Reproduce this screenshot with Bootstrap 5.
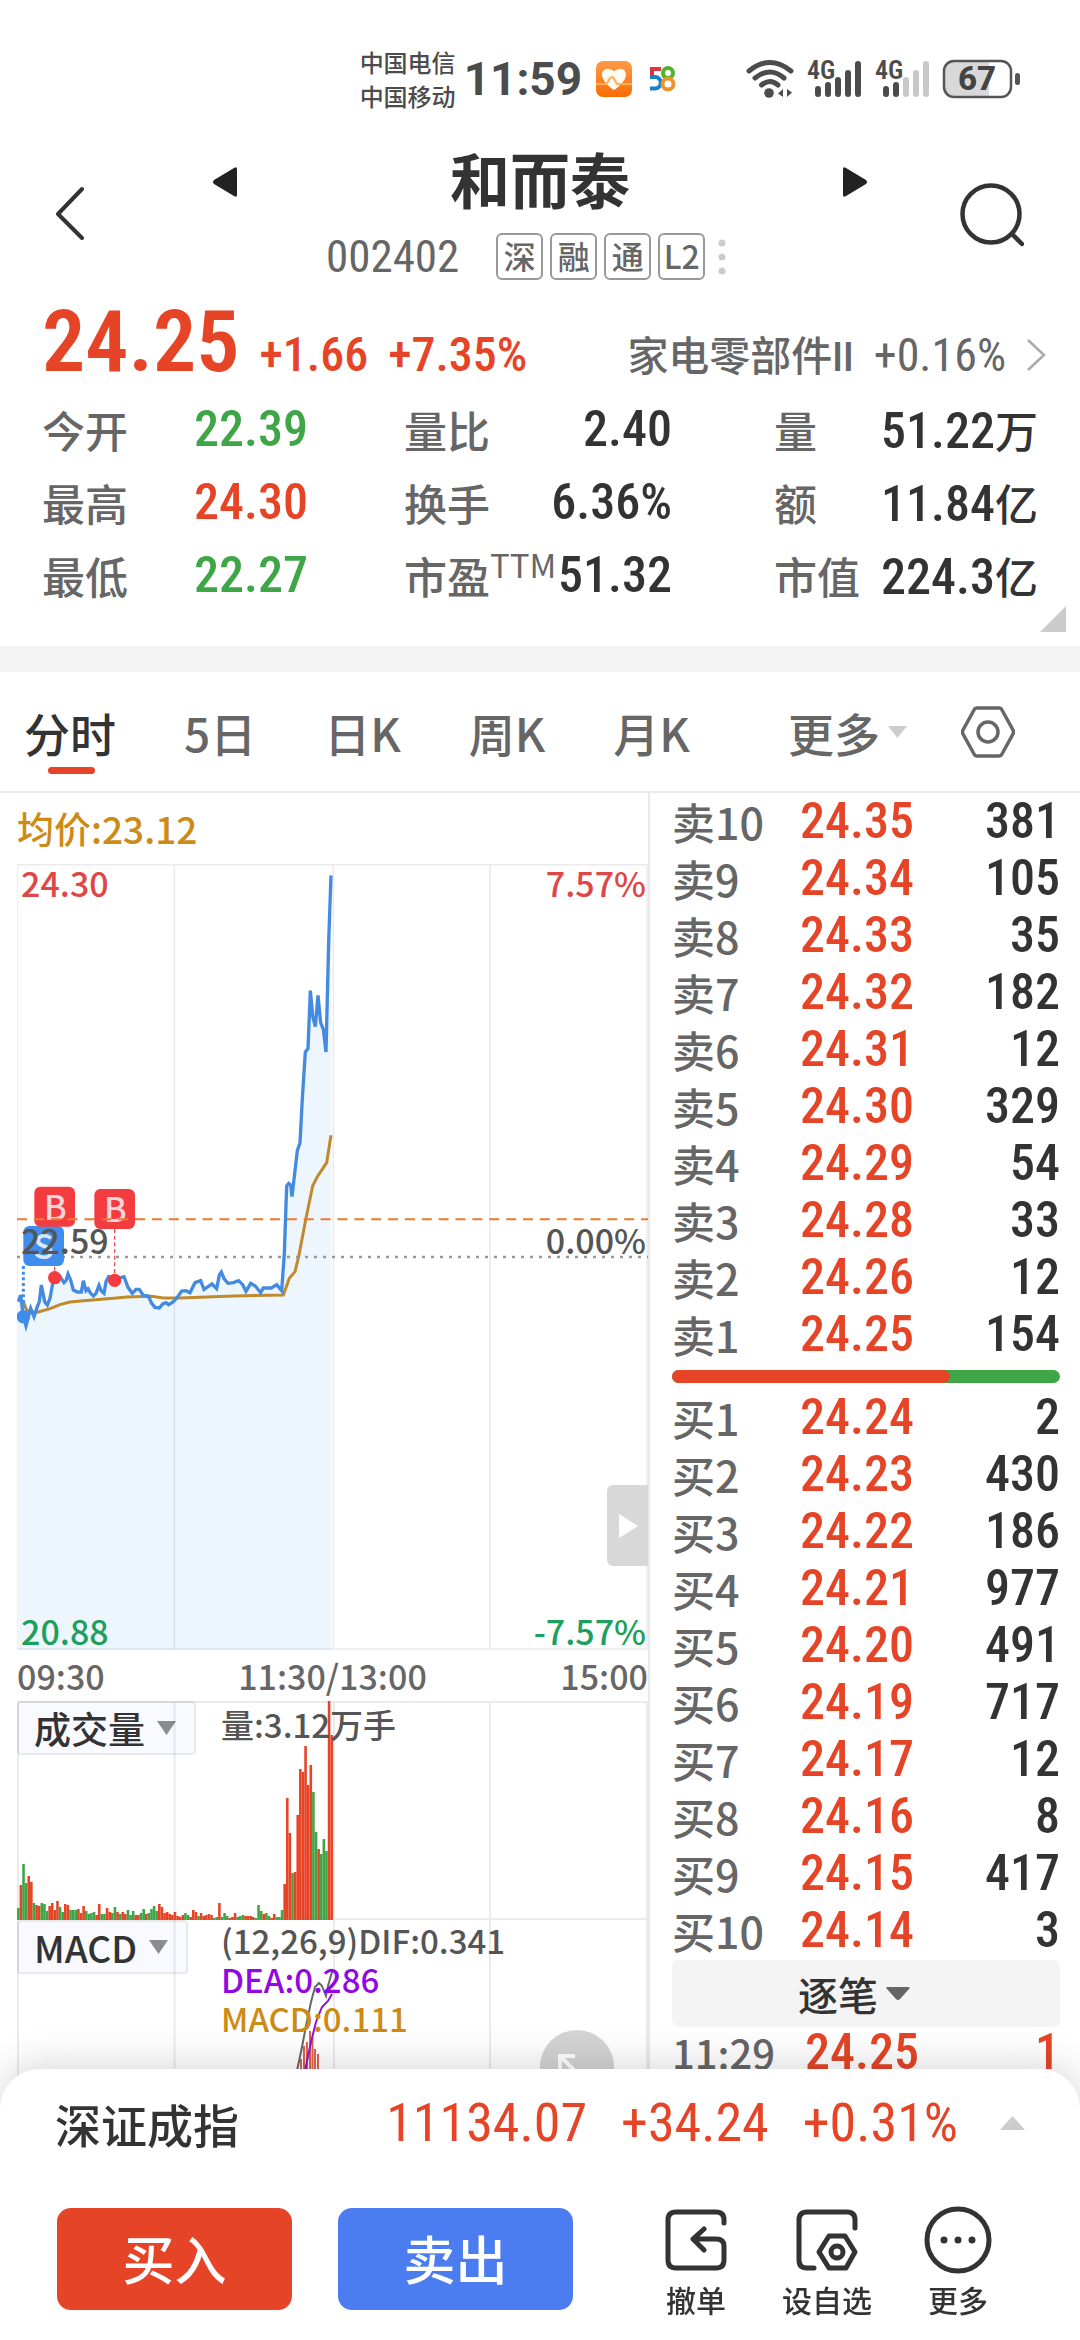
<!DOCTYPE html>
<html lang="zh-CN">
<head>
<meta charset="utf-8">
<meta name="viewport" content="width=device-width, initial-scale=1">
<title>和而泰 002402</title>
<link href="https://cdn.jsdelivr.net/npm/bootstrap@5.3.0/dist/css/bootstrap.min.css" rel="stylesheet">
<style>
  :root { --up:#e64426; --down:#3fa648; --ink:#333; --soft:#666; --rule:#e9e9e9; }
  body { font-family:"Noto Sans CJK SC","Noto Sans",sans-serif; font-weight:500; color:var(--ink); background:#fff; line-height:1; overflow-x:hidden; }
  .digits { font-family:"Roboto Condensed",Roboto,"Noto Sans CJK SC",sans-serif; }
  .up { color:var(--up); } .down { color:var(--down); } .soft { color:var(--soft); }
  button { font-weight:500; color:inherit; }
  svg { display:block; flex-shrink:0; }
  .plain { background:none; border:0; padding:0; }

  .status-row { padding:45px 59px 0 33.3%; color:#4c4c4c; }
  .carriers { font-size:24px; line-height:34px; }
  .clock { font-family:Roboto,sans-serif; font-size:46px; font-weight:700; margin:0 14px 0 8px; }

  .stock-head { padding:30px 56px 0; }
  .stock-mid { margin:0 92px 0 128px; }
  .stock-name { font-size:60px; line-height:70px; font-weight:700; }
  .code-line { padding-left:114px; margin-top:20px; gap:7px; }
  .code-num { font-size:45px; font-weight:400; line-height:47px; margin-right:30px; }
  .tag-box { width:47px; height:47px; border:2px solid #999; border-radius:6px; font-size:32px; line-height:41px; text-align:center; color:var(--soft); }

  .price-line { height:80px; padding:0 34px 0 42px; margin-top:22px; line-height:80px; }
  .price-big { font-size:86px; font-weight:600; }
  .price-sub { font-size:48px; margin-left:20px; }
  .sector { font-size:41px; gap:20px; text-decoration:none; }
  .sector .digits { font-size:46px; font-weight:400; }

  .stats { padding:0 42px 34px; margin-top:11px; gap:0 102px; display:grid; grid-template-columns:minmax(0,260fr) minmax(0,268fr) minmax(0,264fr); }
  .stat { height:73px; line-height:73px; font-size:43px; color:var(--soft); white-space:nowrap; }
  .stat-key { flex:0 0 152px; }
  .stat .digits { font-size:50px; }
  .stat .ink { color:var(--ink); }
  .stat sup { font-size:33px; font-weight:400; line-height:0; top:-16px; vertical-align:baseline; }
  .corner { right:14px; bottom:14px; }
  .band { height:26px; background:#f4f4f4; }

  .tabs { height:121px; padding:28px 65px 0 24px; border-bottom:2px solid var(--rule); gap:68px; font-size:46px; line-height:64px; }
  .tabs a, .tabs button { color:var(--soft); text-decoration:none; white-space:nowrap; }
  .tabs a.on { color:var(--ink); position:relative; }
  .tabs a.on::after { content:""; position:absolute; left:24px; right:21px; bottom:-10px; height:7px; border-radius:4px; background:var(--up); }

  .col-chart { flex:0 0 60%; padding-left:17px; min-width:0; }
  .col-book { flex:0 0 40%; padding:0 20px 0 22px; border-left:2px solid var(--rule); min-width:0; }
  .avg { font-size:37px; line-height:71px; color:#cd8b16; }
  .lab { position:absolute; font-size:34px; line-height:40px; color:#555; }
  .lab.l { left:4px; } .lab.r { right:2px; }
  .lab.t { top:-1px; color:#df4646; } .lab.m { top:356px; } .lab.b { bottom:-1px; color:#1d9f5f; }
  .handle { position:absolute; right:0; bottom:84px; width:41px; height:81px; background:#d8d8d8; border-radius:6px 0 0 6px; padding-left:12px; }
  .times { line-height:51px; font-size:34px; color:var(--soft); }
  .picker { position:absolute; left:0; top:0; height:54px; border:2px solid var(--rule); border-radius:4px; background:#f9faff; padding:0 18px 0 15px; font-size:37px; line-height:48px; gap:12px; }
  .readout { position:absolute; left:204px; top:3px; font-size:33px; line-height:40px; color:#555; }
  .readout.m3 { top:1px; line-height:39px; }
  .expand { position:absolute; right:34px; top:110px; width:74px; height:74px; border-radius:50%; background:#d4d4d4; padding-left:18px; padding-top:0; }

  .book { width:100%; }
  .book td { padding:0; height:57px; line-height:57px; }
  .book td:first-child { width:128px; font-size:43px; color:var(--soft); white-space:nowrap; }
  .book td:nth-child(2) { font-size:50px; color:var(--up); }
  .book td:last-child { font-size:50px; text-align:right; }
  .ratio { height:13px; margin:7px 0 6px; background:var(--down); border-radius:7px; overflow:hidden; }
  .ratio div { height:13px; background:var(--up); border-radius:0 7px 7px 0; }
  .tick-head { height:67px; margin-top:1px; background:#f4f4f4 !important; border-radius:6px; font-size:40px; gap:8px; padding-right:24px; }
  .book.last td { height:51px; line-height:51px; }
  .book.last td:first-child { width:133px; font-size:40px; }
  .book.last td:last-child { color:var(--up); }

  .sheet { background:#fff; border-radius:40px 40px 0 0; box-shadow:0 -4px 40px rgba(0,0,0,.16); padding-bottom:20px; }
  .index-line { padding:0 55px 0 55px; line-height:108px; height:108px; font-size:46px; gap:34px; }
  .index-line .digits { font-size:54px; font-weight:400; }
  .actions { padding:0 88px 0 57px; margin-top:29px; }
  .trade { width:235px; height:102px; margin-top:2px; border:0; border-radius:14px; color:#fff; font-size:52px; line-height:90px; padding-bottom:4px; }
  .trade.buy { background:#e64426; } .trade.sell { background:#4b7cf0; margin-left:46px; }
  .act { font-size:30px; line-height:42px; gap:4px; }
</style>
</head>
<body>
<div class="status-row d-flex align-items-center">
  <div class="carriers text-nowrap">中国电信<br>中国移动</div>
  <div class="clock">11:59</div>
  <svg width="36" height="38" viewBox="0 0 36 38"><defs><linearGradient id="og" x1="0" y1="0" x2="0" y2="1"><stop offset="0" stop-color="#fd9a45"/><stop offset="1" stop-color="#fb6c07"/></linearGradient></defs><rect y="1" width="36" height="36" rx="7" fill="url(#og)"/><path d="M18 30C12 26 6 20 6 14.500C6 9 13 6.500 18 11.500C23 6.500 30 9 30 14.500C30 20 24 26 18 30Z" fill="#fffaf2"/><path d="M0 24H10C12 24 13 17 16 17C19 17 19 24 22 24H36" fill="none" stroke="#fdb15a" stroke-width="2.200"/></svg>
  <svg class="ms-3" width="30" height="26" viewBox="0 0 30 26" fill="none" stroke-width="4"><path d="M13 3H4V11" stroke="#d9383f"/><path d="M2 11H7A5.500 5.500 0 0 1 7 22.500H2" stroke="#1681c4"/><circle cx="20" cy="7" r="5" stroke="#52b42c"/><circle cx="20" cy="18" r="5.500" stroke="#ee942f"/></svg>
  <div class="d-flex align-items-center ms-auto" style="gap:12px">
    <svg width="48" height="40" viewBox="0 0 48 40" fill="none" stroke="#4c4c4c" stroke-width="5" stroke-linecap="round"><path d="M3 12Q24-5 45 12M9 19Q24 7 38 19M15.500 26Q24 19 32 26"/><circle cx="23" cy="34" r="4.800" fill="#4c4c4c" stroke="none"/><path d="M37 30V38L32 34.500ZM41 30V38L46 33.500Z" fill="#4c4c4c" stroke="none"/></svg>
    <svg width="56" height="40" viewBox="0 0 56 40"><g stroke="#4c4c4c" stroke-width="6" stroke-linecap="round"><path d="M12 30V35M22 26V35M32 21V35M42 14V35M52 5V35"/></g><text x="1" y="20" font-family="Roboto Condensed,Roboto,sans-serif" font-weight="600" font-size="26" fill="#4c4c4c">4G</text></svg>
    <svg width="56" height="40" viewBox="0 0 56 40"><g stroke-width="6" stroke-linecap="round"><path d="M12 30V35M22 26V35" stroke="#4c4c4c"/><path d="M32 21V35M42 14V35M52 5V35" stroke="#c8c8c8"/></g><text x="1" y="20" font-family="Roboto Condensed,Roboto,sans-serif" font-weight="600" font-size="26" fill="#4c4c4c">4G</text></svg>
    <svg width="79" height="40" viewBox="0 0 79 40"><rect x="2" y="2" width="67" height="36" rx="10" fill="#fff"/><path d="M12 2H47V38H12Q2 38 2 28V12Q2 2 12 2Z" fill="#d8d8d8"/><rect x="2" y="2" width="67" height="36" rx="10" fill="none" stroke="#555" stroke-width="2.500"/><rect x="73" y="14" width="5" height="12" rx="2.500" fill="#555"/><text x="35" y="31" text-anchor="middle" font-family="Roboto,sans-serif" font-weight="800" font-size="33" fill="#444">67</text></svg>
  </div>
</div>

<header class="stock-head d-flex align-items-center">
  <button class="plain" aria-label="返回"><svg width="28" height="56" viewBox="0 0 28 56" fill="none" stroke="#333" stroke-width="4" stroke-linecap="round" stroke-linejoin="round"><path d="M26 5L2 30 26 54"/></svg></button>
  <div class="stock-mid flex-fill">
    <div class="d-flex justify-content-between align-items-center">
      <button class="plain pt-2" aria-label="上一只"><svg width="25" height="30" viewBox="0 0 25 30"><path d="M25 2V28Q25 31 22 29L2 17Q0 15 2 13L22 1Q25-1 25 2Z" fill="#222"/></svg></button>
      <h1 class="stock-name mb-0">和而泰</h1>
      <button class="plain pt-2" aria-label="下一只"><svg width="25" height="30" viewBox="0 0 25 30"><path d="M0 2V28Q0 31 3 29L23 17Q25 15 23 13L3 1Q0-1 0 2Z" fill="#222"/></svg></button>
    </div>
    <div class="code-line d-flex align-items-center">
      <span class="code-num digits soft">002402</span>
      <span class="tag-box">深</span><span class="tag-box">融</span><span class="tag-box">通</span><span class="tag-box">L2</span>
      <svg class="ms-1" width="22" height="36" viewBox="0 0 22 36" fill="#ccc"><circle cx="6" cy="4" r="3.500"/><circle cx="6" cy="18" r="3.500"/><circle cx="6" cy="32" r="3.500"/></svg>
    </div>
  </div>
  <button class="plain" aria-label="搜索"><svg width="64" height="70" viewBox="0 0 64 70" fill="none" stroke="#333" stroke-width="4.500" stroke-linecap="round"><circle cx="31" cy="37" r="28.500"/><path d="M52 57L62 67"/></svg></button>
</header>

<div class="price-line d-flex align-items-baseline digits up">
  <span class="price-big">24.25</span><span class="price-sub">+1.66</span><span class="price-sub">+7.35%</span>
  <a href="#" class="sector soft d-flex align-items-baseline ms-auto"><span>家电零部件II</span><span class="digits">+0.16%</span>
    <svg width="20" height="32" viewBox="0 0 20 32" fill="none" stroke="#aaa" stroke-width="2.500"><path d="M2 1L18 16 2 31"/></svg></a>
</div>

<section class="position-relative">
  <div class="stats">
    <div class="stat d-flex"><span class="stat-key">今开</span><span class="digits down">22.39</span></div>
    <div class="stat d-flex justify-content-between"><span>量比</span><span class="digits ink">2.40</span></div>
    <div class="stat d-flex justify-content-between"><span>量</span><span class="ink"><span class="digits">51.22</span>万</span></div>
    <div class="stat d-flex"><span class="stat-key">最高</span><span class="digits up">24.30</span></div>
    <div class="stat d-flex justify-content-between"><span>换手</span><span class="digits ink">6.36%</span></div>
    <div class="stat d-flex justify-content-between"><span>额</span><span class="ink"><span class="digits">11.84</span>亿</span></div>
    <div class="stat d-flex"><span class="stat-key">最低</span><span class="digits down">22.27</span></div>
    <div class="stat d-flex justify-content-between"><span>市盈<sup>TTM</sup></span><span class="digits ink">51.32</span></div>
    <div class="stat d-flex justify-content-between"><span>市值</span><span class="ink"><span class="digits">224.3</span>亿</span></div>
  </div>
  <svg class="corner position-absolute" width="26" height="26" viewBox="0 0 26 26"><path d="M26 0V26H0Z" fill="#ccc"/></svg>
</section>
<div class="band"></div>

<nav class="tabs d-flex align-items-start">
  <a href="#" class="on">分时</a><a href="#">5日</a><a href="#">日K</a><a href="#">周K</a><a href="#">月K</a>
  <div class="d-flex align-items-center ms-auto" style="height:64px">
    <button class="plain d-flex align-items-center">更多 <svg class="ms-2" width="19" height="12" viewBox="0 0 19 12"><path d="M0 0H19L9.500 12Z" fill="#ccc"/></svg></button>
    <button class="plain" style="margin-left:54px" aria-label="设置"><svg width="54" height="52" viewBox="0 0 54 52" fill="none" stroke="#666" stroke-width="3.500" stroke-linejoin="round"><path d="M16 2H38Q40 2 41 4L52 24Q53 26 52 28L41 48Q40 50 38 50H16Q14 50 13 48L2 28Q1 26 2 24L13 4Q14 2 16 2Z"/><circle cx="27" cy="26" r="10"/></svg></button>
  </div>
</nav>

<main class="d-flex">
  <section class="col-chart">
    <div class="avg">均价:23.12</div>
    <div class="position-relative">
      <!-- intraday price, average price, trade markers -->
      <svg width="100%" viewBox="51 12 1893 2358">
        <path d="M55 1325L62 1305 70 1370 78 1398 92 1345 102 1370 112 1340 118 1325 124 1275 134 1325 142 1335 150 1315 160 1260 180 1250 192 1268 198 1262 204 1242 212 1260 220 1290 232 1296 244 1296 250 1262 258 1292 264 1286 272 1300 280 1308 288 1300 297 1276 304 1293 312 1300 318 1265 326 1250 344 1258 372 1250 384 1282 397 1300 408 1288 418 1288 430 1306 445 1308 455 1330 465 1342 478 1344 488 1332 498 1328 506 1334 520 1325 532 1312 545 1293 558 1292 570 1298 585 1268 602 1262 612 1288 624 1280 636 1272 650 1286 658 1245 664 1236 672 1256 684 1270 700 1268 716 1262 728 1274 738 1294 752 1270 766 1278 782 1298 790 1284 814 1284 830 1274 845 1292 848 1250 853 1180 860 978 866 970 872 975 876 1010 884 940 892 872 900 848 907 715 916 576 924 566 931 392 938 468 946 500 954 406 962 488 970 508 978 576 986 245 993 46V2370H55Z" fill="#edf5fd"/>
        <path d="M51 14H1941V2367H51Z M523 14V2367M1000 14V2367M1470 14V2367" fill="none" stroke="#000" stroke-opacity=".08" stroke-width="5"/>
        <path d="M60 1328L70 1325 80 1350 92 1356 115 1356 150 1346 180 1334 210 1326 250 1322 350 1314 380 1311 455 1309 490 1314 540 1314 700 1308 850 1305 868 1255 885 1235 896 1190 918 1075 938 978 952 950 980 908 993 826" fill="none" stroke="#c08a2c" stroke-width="9"/>
        <path d="M55 1325L62 1305 70 1370 78 1398 92 1345 102 1370 112 1340 118 1325 124 1275 134 1325 142 1335 150 1315 160 1260 180 1250 192 1268 198 1262 204 1242 212 1260 220 1290 232 1296 244 1296 250 1262 258 1292 264 1286 272 1300 280 1308 288 1300 297 1276 304 1293 312 1300 318 1265 326 1250 344 1258 372 1250 384 1282 397 1300 408 1288 418 1288 430 1306 445 1308 455 1330 465 1342 478 1344 488 1332 498 1328 506 1334 520 1325 532 1312 545 1293 558 1292 570 1298 585 1268 602 1262 612 1288 624 1280 636 1272 650 1286 658 1245 664 1236 672 1256 684 1270 700 1268 716 1262 728 1274 738 1294 752 1270 766 1278 782 1298 790 1284 814 1284 830 1274 845 1292 848 1250 853 1180 860 978 866 970 872 975 876 1010 884 940 892 872 900 848 907 715 916 576 924 566 931 392 938 468 946 500 954 406 962 488 970 508 978 576 986 245 993 46" fill="none" stroke="#448ae0" stroke-width="10"/>
        <path d="M51 1191H1944" stroke="#999" stroke-width="8" stroke-dasharray="9 18"/>
        <path d="M70 1218V1360" stroke="#3f8ded" stroke-width="9" stroke-dasharray="9 8"/>
        <path d="M164 1100V1250M344 1107V1258" stroke="#e8505a" stroke-width="4" stroke-dasharray="12 8"/>
        <circle cx="70" cy="1370" r="20" fill="#3f8ded"/><circle cx="164" cy="1253" r="20" fill="#f33c40"/><circle cx="344" cy="1261" r="20" fill="#f33c40"/>
        <rect x="70" y="1098" width="122" height="120" rx="18" fill="#3f8ded"/><rect x="103" y="980" width="122" height="120" rx="18" fill="#f33c40"/><rect x="283" y="987" width="122" height="120" rx="18" fill="#f33c40"/>
        <g font-family="Noto Sans CJK SC,sans-serif" font-weight="500" font-size="102" text-anchor="middle" fill="#fbd5d8"><text x="166" y="1080">B</text><text x="346" y="1087">B</text><text x="131" y="1197" fill="#dbe8fb">S</text></g>
        <path d="M51 1078H1944" stroke="#ec7a2e" stroke-width="6" stroke-dasharray="30 20.600"/>
      </svg>
      <span class="lab l t">24.30</span><span class="lab r t">7.57%</span>
      <span class="lab l m">22.59</span><span class="lab r m">0.00%</span>
      <span class="lab l b">20.88</span><span class="lab r b">-7.57%</span>
      <button class="plain handle" style="background:#d8d8d8" aria-label="收起"><svg width="19" height="24" viewBox="0 0 19 24"><path d="M0 0L19 12 0 24Z" fill="#fff"/></svg></button>
    </div>
    <div class="times d-flex justify-content-between"><span>09:30</span><span>11:30/13:00</span><span>15:00</span></div>
    <div class="position-relative">
      <button class="picker d-flex align-items-center">成交量 <svg width="19" height="14" viewBox="0 0 19 14"><path d="M0 0H19L9.500 14Z" fill="#8c8c8c"/></svg></button>
      <svg class="position-relative pe-none" width="100%" viewBox="0 0 631 219">
        <path d="M1 1H630V218H1ZM157.500 1V218M317 1V218M473 1V218" fill="none" stroke="#000" stroke-opacity=".08" stroke-width="2"/>
        <g id="vol"></g>
      </svg>
      <span class="readout">量:3.12万手</span>
    </div>
    <div class="position-relative">
      <button class="picker d-flex align-items-center">MACD <svg width="19" height="14" viewBox="0 0 19 14"><path d="M0 0H19L9.500 14Z" fill="#8c8c8c"/></svg></button>
      <svg class="position-relative pe-none" width="100%" viewBox="0 0 631 160">
        <path d="M1 0V160M630 0V160M157.500 0V160M317 0V160M473 0V160" fill="none" stroke="#000" stroke-opacity=".08" stroke-width="2"/>
        <path d="M284 139V160M287 126V160M290 122V160M293 111V160M295.500 117V160M298 129V160M301 134V160" stroke="#e0614c" stroke-width="2"/>
        <path d="M279 155L281 146 285 127 289 106 294 82 298 67 302 63 305 66 309 76 311 66 315 52" fill="none" stroke="#666" stroke-width="2"/>
        <path d="M286 160L289 146 294 122 299 102 305 87 311 81 315 74" fill="none" stroke="#9013d8" stroke-width="2"/>
      </svg>
      <span class="readout m3">(12,26,9)DIF:0.341<br><span style="color:#9108e4">DEA:0.286</span><br><span style="color:#cd8b16">MACD:0.111</span></span>
      <button class="plain expand" style="background:#d4d4d4" aria-label="全屏"><svg width="26" height="26" viewBox="0 0 26 26" fill="none" stroke="#fff" stroke-width="4"><path d="M2 18V2H17M2 2L24 24"/></svg></button>
    </div>
  </section>

  <section class="col-book">
    <table class="book"><tbody id="asks"></tbody></table>
    <div class="ratio"><div style="width:71.6%"></div></div>
    <table class="book"><tbody id="bids"></tbody></table>
    <button class="plain tick-head w-100 d-flex justify-content-center align-items-center">逐笔 <svg width="24" height="14" viewBox="0 0 24 14"><path d="M2 0H22Q25 0 23 2L14 12Q12 14 10 12L1 2Q-1 0 2 0Z" fill="#666"/></svg></button>
    <table class="book last"><tbody><tr><td>11:29</td><td class="digits">24.25</td><td class="digits">1</td></tr></tbody></table>
  </section>
</main>

<footer class="sheet fixed-bottom">
  <div class="index-line d-flex align-items-center">
    <span class="me-auto">深证成指</span><span class="digits up">11134.07</span><span class="digits up">+34.24</span><span class="digits up">+0.31%</span>
    <svg class="ms-2" width="25" height="14" viewBox="0 0 25 14"><path d="M12.500 0L25 14H0Z" fill="#ccc"/></svg>
  </div>
  <div class="actions d-flex align-items-start">
    <button class="trade buy">买入</button>
    <button class="trade sell">卖出</button>
    <div class="d-flex ms-auto" style="gap:52px">
      <button class="plain act d-flex flex-column align-items-center"><svg width="68" height="68" viewBox="0 0 68 68" fill="none" stroke="#333" stroke-width="5" stroke-linecap="round" stroke-linejoin="round"><path d="M62 17V14Q62 6 54 6H14Q6 6 6 14V54Q6 62 14 62H54Q62 62 62 54V40Q62 33 54 33H31M42 23L31 33 42 44"/></svg>撤单</button>
      <button class="plain act d-flex flex-column align-items-center"><svg width="68" height="68" viewBox="0 0 68 68" fill="none" stroke="#333" stroke-width="5" stroke-linecap="round" stroke-linejoin="round"><path d="M62 22V14Q62 6 54 6H14Q6 6 6 14V54Q6 62 14 62H21M36 30H52L62 46 53 62H36L26 46Z"/><circle cx="44" cy="46" r="6"/></svg>设自选</button>
      <button class="plain act d-flex flex-column align-items-center"><svg width="68" height="68" viewBox="0 0 68 68"><circle cx="34" cy="34" r="31" fill="none" stroke="#333" stroke-width="5"/><g fill="#333"><circle cx="20" cy="34" r="3.500"/><circle cx="34" cy="34" r="3.500"/><circle cx="48" cy="34" r="3.500"/></g></svg>更多</button>
    </div>
  </div>
</footer>

<script src="https://cdn.jsdelivr.net/npm/bootstrap@5.3.0/dist/js/bootstrap.bundle.min.js"></script>
<script>
  // Order book levels: price, lots
  const asks = [[24.35,381],[24.34,105],[24.33,35],[24.32,182],[24.31,12],[24.30,329],[24.29,54],[24.28,33],[24.26,12],[24.25,154]];
  const bids = [[24.24,2],[24.23,430],[24.22,186],[24.21,977],[24.20,491],[24.19,717],[24.17,12],[24.16,8],[24.15,417],[24.14,3]];
  const row = (n, r) => `<tr><td>${n}</td><td class="digits">${r[0].toFixed(2)}</td><td class="digits">${r[1]}</td></tr>`;
  document.getElementById('asks').innerHTML = asks.map((r, i) => row('卖' + (10 - i), r)).join('');
  document.getElementById('bids').innerHTML = bids.map((r, i) => row('买' + (i + 1), r)).join('');
  // Minute volume bars, r = rising, g = falling
  const vol = 'g12 r35 g56 g37 r44 r38 g17 r15 r14 g17 g16 g9 r14 r17 r10 r19 g13 g8 r16 r15 g10 g10 g10 r11 r7 r14 g9 g6 g7 g8 r5 r16 g6 g6 r12 r8 g7 g13 r8 g6 r8 r6 g10 g5 g9 r5 r5 g7 g11 r6 g7 g11 g14 g9 r16 r13 r7 r8 r6 r5 r8 r4 r3 r5 g7 g5 r3 r10 r8 g4 r7 r4 r5 r6 r5 g2 g3 r17 g3 g7 g4 r2 r3 r7 g3 g4 g5 r4 r4 r4 r3 g2 g15 g9 r6 g7 g4 r2 r6 g3 g3 g10 r36 r122 r87 g47 r48 r105 r151 r148 r174 r135 r155 g128 g88 r71 g66 g81 g69 r219 r185'.split(' ');
  const step = 316 / vol.length;
  document.getElementById('vol').innerHTML = vol.map((v, i) => {
    const h = +v.slice(1);
    return `<rect x="${(i * step).toFixed(2)}" y="${219 - h}" width="2.600" height="${h}" fill="${v[0] === 'r' ? '#e64426' : '#3fa648'}"/>`;
  }).join('');
</script>
</body>
</html>
